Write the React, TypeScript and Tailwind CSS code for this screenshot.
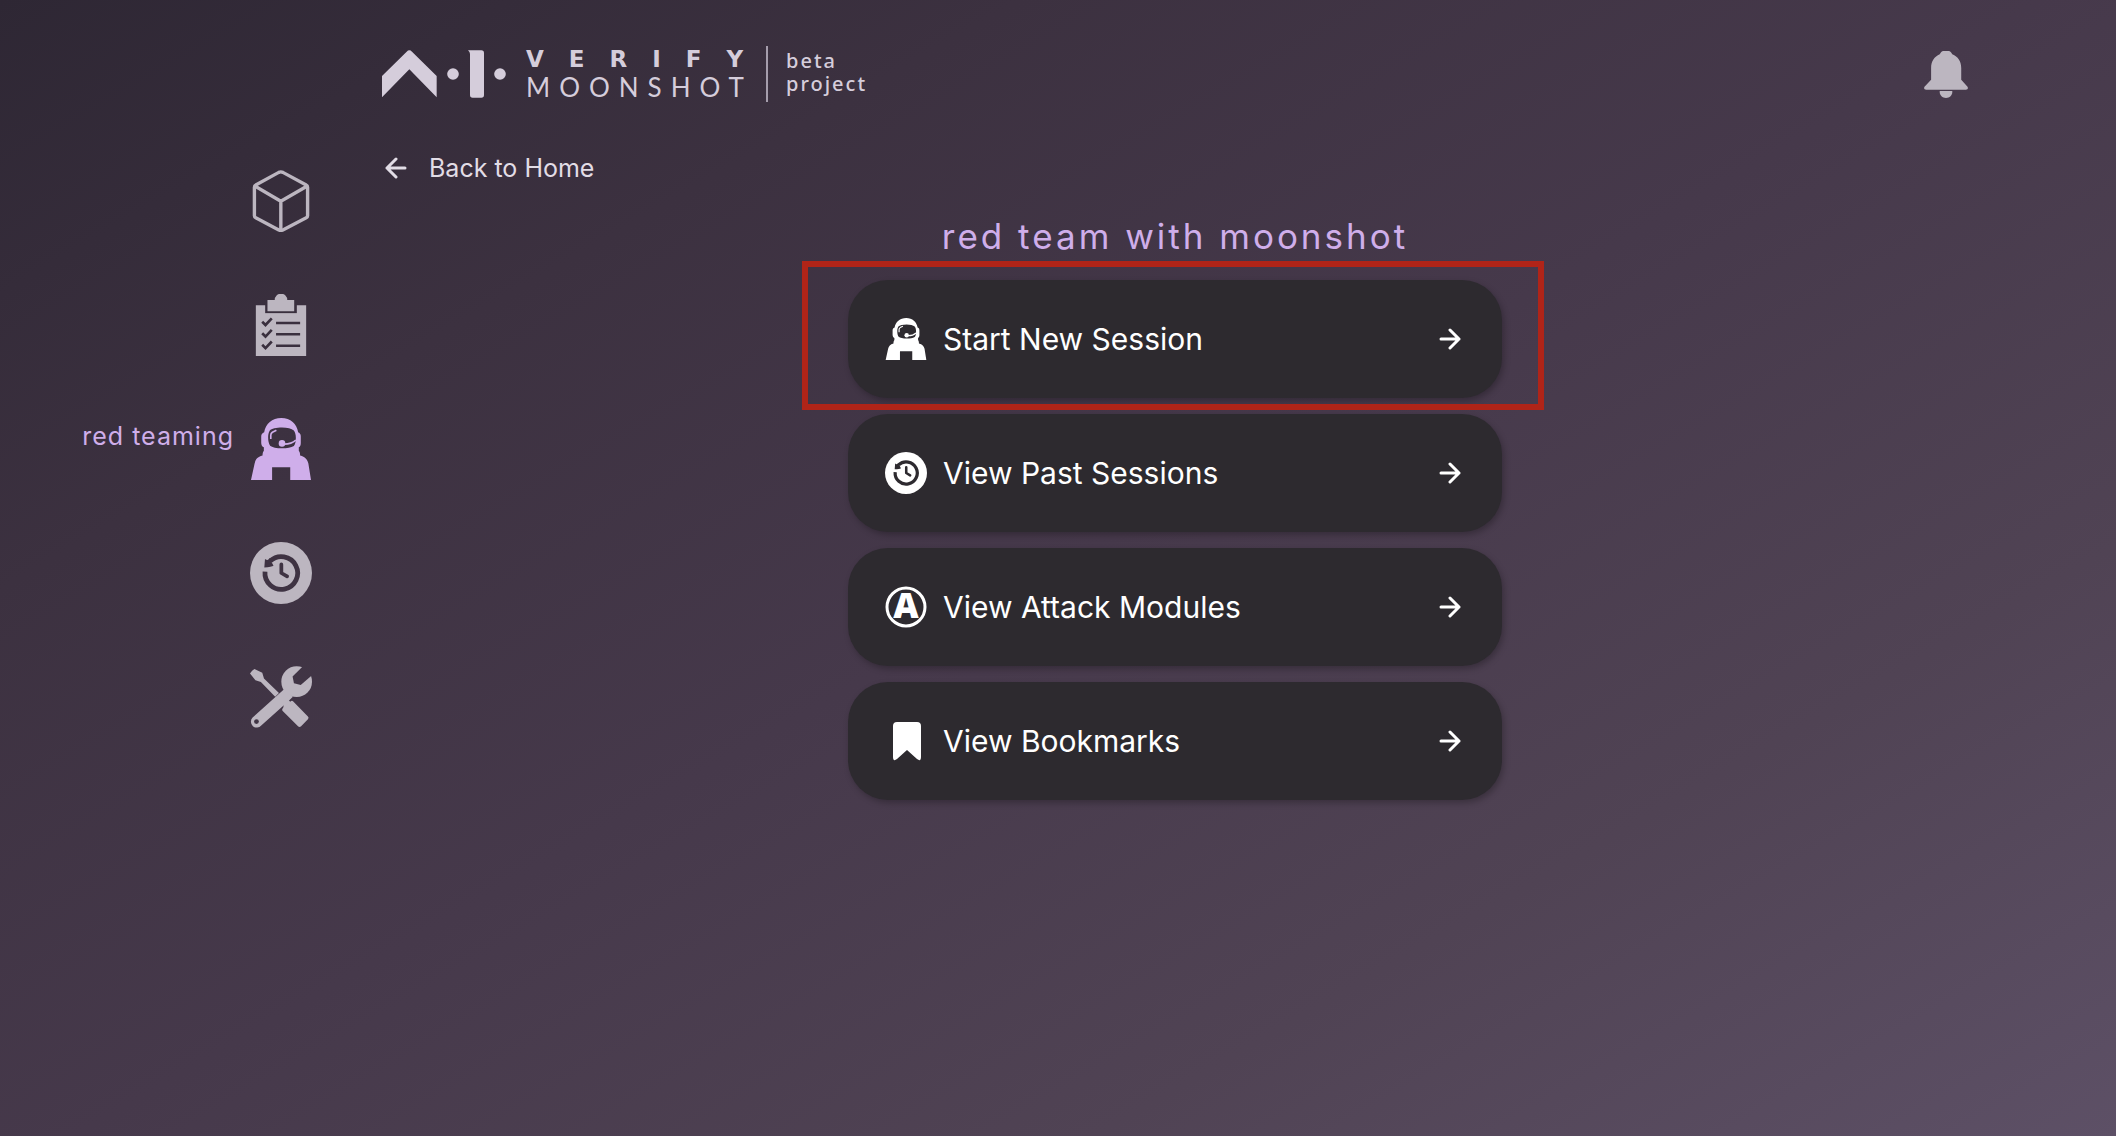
import { useId, type ReactNode } from 'react';

type IconProps = { className?: string };

function LogoMark() {
  return (
    <svg viewBox="0 0 372 144" className="h-12 w-[124px] shrink-0" fill="currentColor" aria-hidden="true">
      <path d="M0 78 74 5q8-8 16 0l74 73v64L82 58 0 142Z" />
      <circle cx="213" cy="72" r="17.5" />
      <path d="M258 1h40q8 0 8 8v126q0 8-8 8h-26q-8 0-8-8V12q0-6-6-11Z" />
      <circle cx="354" cy="72" r="17.5" />
    </svg>
  );
}

function CubeIcon({ className }: IconProps) {
  return (
    <svg viewBox="-9 0 183 183" className={className} fill="none" stroke="currentColor" strokeWidth="10" strokeLinejoin="round" aria-hidden="true">
      <path d="M76 7q6-3 12 0l69 37q4 2 4 7v84q0 4-4 6l-69 36q-6 3-12 0L8 141q-4-2-4-6V51q0-5 4-7Z" />
      <path d="m5 47 77 45 78-45M82 92v86" />
    </svg>
  );
}

function ClipboardIcon({ className }: IconProps) {
  const id = useId();
  return (
    <svg viewBox="-17 0 188 188" className={className} fill="currentColor" aria-hidden="true">
      <mask id={id}>
        <rect width="154" height="188" fill="white" />
        <path d="M29 30h96v28H29Z" fill="black" />
        <g fill="none" stroke="black" strokeWidth="7">
          <path d="M62 88h73M62 122h73M62 157h73" />
          <path d="m20 84 10 10 19-20m-29 45 10 10 19-20m-29 45 10 10 19-20" strokeWidth="8" />
        </g>
      </mask>
      <path d="M0 34h154v154H0Z" mask={`url(#${id})`} />
      <path d="M36 18h22a19 19 0 0 1 38 0h21v34H36Z" />
    </svg>
  );
}

function AstronautIcon({ className }: IconProps) {
  return (
    <svg viewBox="0 0 182 188" className={className} fill="currentColor" aria-hidden="true">
      <path
        fillRule="evenodd"
        d="M92 0c28 0 47 18 51 43 6 2 8 7 8 13v20c0 7-2 11-6 13v10c3 4 4 8 4 15 15 4 22 12 25 24l8 50h-63v-39H64v39H0l11-50c3-13 9-20 24-24 0-7 1-11 4-15V89c-5-2-8-7-8-14V56c0-6 3-11 9-13C44 18 64 0 92 0ZM94 29c-17 0-32 3-37 9-4 7-5 14-5 22 0 9 2 18 6 24 6 5 20 8 36 8 15 0 28-2 36-7 5-6 6-15 6-25 0-9-2-17-6-22-7-6-20-9-36-9Z"
      />
      <circle cx="94" cy="77" r="10" />
      <path d="M96 79c17 1 29-2 40-12M60 64V52q0-6 5-9l12-6" fill="none" stroke="currentColor" strokeWidth="5" />
    </svg>
  );
}

function HistoryIcon({ className }: IconProps) {
  const id = useId();
  return (
    <svg viewBox="0 0 182 182" className={className} aria-hidden="true">
      <mask id={id}>
        <rect width="182" height="182" fill="white" />
        <path d="M44 87a48 48 0 1 0 15-31" fill="none" stroke="black" strokeWidth="14" />
        <path d="M44 50q10 7 13-3l12 23q-5 4-27 5Z" fill="black" />
        <path d="M92 66v25l17 10" fill="none" stroke="black" strokeWidth="11" strokeLinecap="round" strokeLinejoin="round" />
      </mask>
      <circle cx="91" cy="91" r="91" fill="currentColor" mask={`url(#${id})`} />
    </svg>
  );
}

function ToolsIcon({ className }: IconProps) {
  const id = useId();
  return (
    <svg viewBox="0 0 182 182" className={className} fill="currentColor" aria-hidden="true">
      <mask id={id}>
        <rect width="182" height="182" fill="white" />
        <circle cx="19" cy="163" r="7" fill="black" />
        <path d="m156 0-31 31 4 20 20 5 33-29V0Z" fill="black" />
      </mask>
      <path d="M0 22q6-9 13-13l23 11 5 17 44 42-11 11-42-43-16-5Z" />
      <path d="m100 104 10-8 8 9q5-5 9-1l43 44q4 4 0 8l-20 21q-5 4-9 0L96 132q-4-4 2-11Z" />
      <g mask={`url(#${id})`}>
        <circle cx="137" cy="46" r="45" />
        <path d="m100 68 26 22-16 16-77 69a17 17 0 0 1-26-23Z" />
      </g>
    </svg>
  );
}

function AttackIcon({ className }: IconProps) {
  return (
    <svg viewBox="0 0 42 42" overflow="visible" className={className} aria-hidden="true">
      <circle cx="21" cy="21" r="19" fill="none" stroke="currentColor" strokeWidth="3" />
      <text x="21" y="32" textAnchor="middle" fill="currentColor" className="font-['Open_Sans'] text-[35px] font-extrabold">
        A
      </text>
    </svg>
  );
}

function BookmarkIcon({ className }: IconProps) {
  return (
    <svg viewBox="0 0 42 42" className={className} fill="currentColor" aria-hidden="true">
      <path d="M12 2h20q4 0 4 4v31q0 5-4 2l-10-9-10 9q-4 3-4-2V6q0-4 4-4Z" />
    </svg>
  );
}

function BellIcon({ className }: IconProps) {
  return (
    <svg viewBox="0 0 132 142" className={className} fill="currentColor" aria-hidden="true">
      <path d="M51 4q3-4 8-4h14q5 0 8 4l4 6c17 7 27 21 27 41v36l19 21q4 9-5 9H6q-9 0-5-9l20-21V51c0-20 10-34 26-41Z" />
      <path d="M47 121h38v3c0 10-8 18-19 18s-19-8-19-18Z" />
    </svg>
  );
}

function Arrow({ direction = 'right' }: { direction?: 'left' | 'right' }) {
  return (
    <svg viewBox="0 0 22 22" className="size-[22px] shrink-0" fill="none" stroke="currentColor" strokeWidth="3" strokeLinecap="round" strokeLinejoin="round" aria-hidden="true">
      <path d={direction === 'right' ? 'M2 11h18M11 2l9 9-9 9' : 'M20 11H2M11 2l-9 9 9 9'} />
    </svg>
  );
}

const navItems: { name: string; icon: ReactNode; active?: boolean }[] = [
  { name: 'home', icon: <CubeIcon className="size-[62px]" /> },
  { name: 'benchmarking', icon: <ClipboardIcon className="size-[62px]" /> },
  { name: 'red teaming', icon: <AstronautIcon className="size-[62px]" />, active: true },
  { name: 'history', icon: <HistoryIcon className="size-[62px]" /> },
  { name: 'utils', icon: <ToolsIcon className="size-[62px]" /> },
];

const actions: { label: string; icon: ReactNode; highlighted?: boolean }[] = [
  { label: 'Start New Session', icon: <AstronautIcon className="size-[42px]" />, highlighted: true },
  { label: 'View Past Sessions', icon: <HistoryIcon className="size-[42px]" /> },
  { label: 'View Attack Modules', icon: <AttackIcon className="size-[42px]" /> },
  { label: 'View Bookmarks', icon: <BookmarkIcon className="size-[42px]" /> },
];

export default function App() {
  return (
    <div className="grid min-h-screen grid-cols-[312px_1fr] gap-x-[70px] bg-[linear-gradient(150deg,#2e2734_0%,#3c3140_25%,#46394b_50%,#504354_75%,#5d5066_100%)] pr-[148px] font-['Inter',sans-serif]">
      <nav className="flex flex-col gap-[62px] pt-[170px] text-[#bcb6c0]">
        {navItems.map((item) => (
          <button
            key={item.name}
            type="button"
            aria-label={item.name}
            className={item.active ? 'flex items-start justify-end gap-4 text-[#cfaeea]' : 'flex justify-end'}
          >
            {item.active && <span className="text-[25px] leading-9 tracking-[1px]">{item.name}</span>}
            {item.icon}
          </button>
        ))}
      </nav>

      <div className="flex flex-col">
        <header className="flex items-center justify-between pt-[46px]">
          <div className="flex items-center text-[#d5cddb]">
            <LogoMark />
            <div className="ml-5 flex w-60 flex-col">
              <span className="font-['DejaVu_Sans'] text-[23px] leading-[26px] font-bold tracking-[25px] whitespace-nowrap">VERIFY</span>
              <span className="font-['Lato'] text-[26px] leading-[30px] tracking-[9px] whitespace-nowrap">MOONSHOT</span>
            </div>
            <div className="h-14 border-l-2 border-[#a59dac]" />
            <div className="ml-[18px] flex flex-col pb-1 font-['Noto_Sans'] text-xl leading-[23px] font-medium tracking-[2px]">
              <span>beta</span>
              <span>project</span>
            </div>
          </div>
          <button type="button" aria-label="Notifications" className="text-[#bcb6c0]">
            <BellIcon className="h-[47px] w-11" />
          </button>
        </header>

        <main className="flex flex-col pt-12">
          <a href="#home" className="flex items-center gap-[22px] self-start pl-[3px] text-[25px] leading-9 text-[#e2dde6]">
            <Arrow direction="left" />
            Back to Home
          </a>

          <section className="mt-[26px] flex w-[654px] max-w-full flex-col self-center">
            <h1 className="text-center text-[35px] leading-[48px] tracking-[3px] text-[#cfaeea]">red team with moonshot</h1>
            <div className="mt-5 flex flex-col gap-4">
              {actions.map((action) => (
                <div key={action.label} className="relative">
                  <button
                    type="button"
                    className="flex h-[118px] w-full items-center gap-4 rounded-[40px] bg-[#2d2a2f] pr-[41px] pl-[37px] text-3xl text-white shadow-[2px_3px_6px_rgba(0,0,0,0.25)]"
                  >
                    {action.icon}
                    <span className="flex-1 text-left">{action.label}</span>
                    <Arrow />
                  </button>
                  {action.highlighted && (
                    <div className="pointer-events-none absolute -top-[19px] right-[-42px] -bottom-3 left-[-46px] z-10 border-[6px] border-[#b02418]" />
                  )}
                </div>
              ))}
            </div>
          </section>
        </main>
      </div>
    </div>
  );
}
